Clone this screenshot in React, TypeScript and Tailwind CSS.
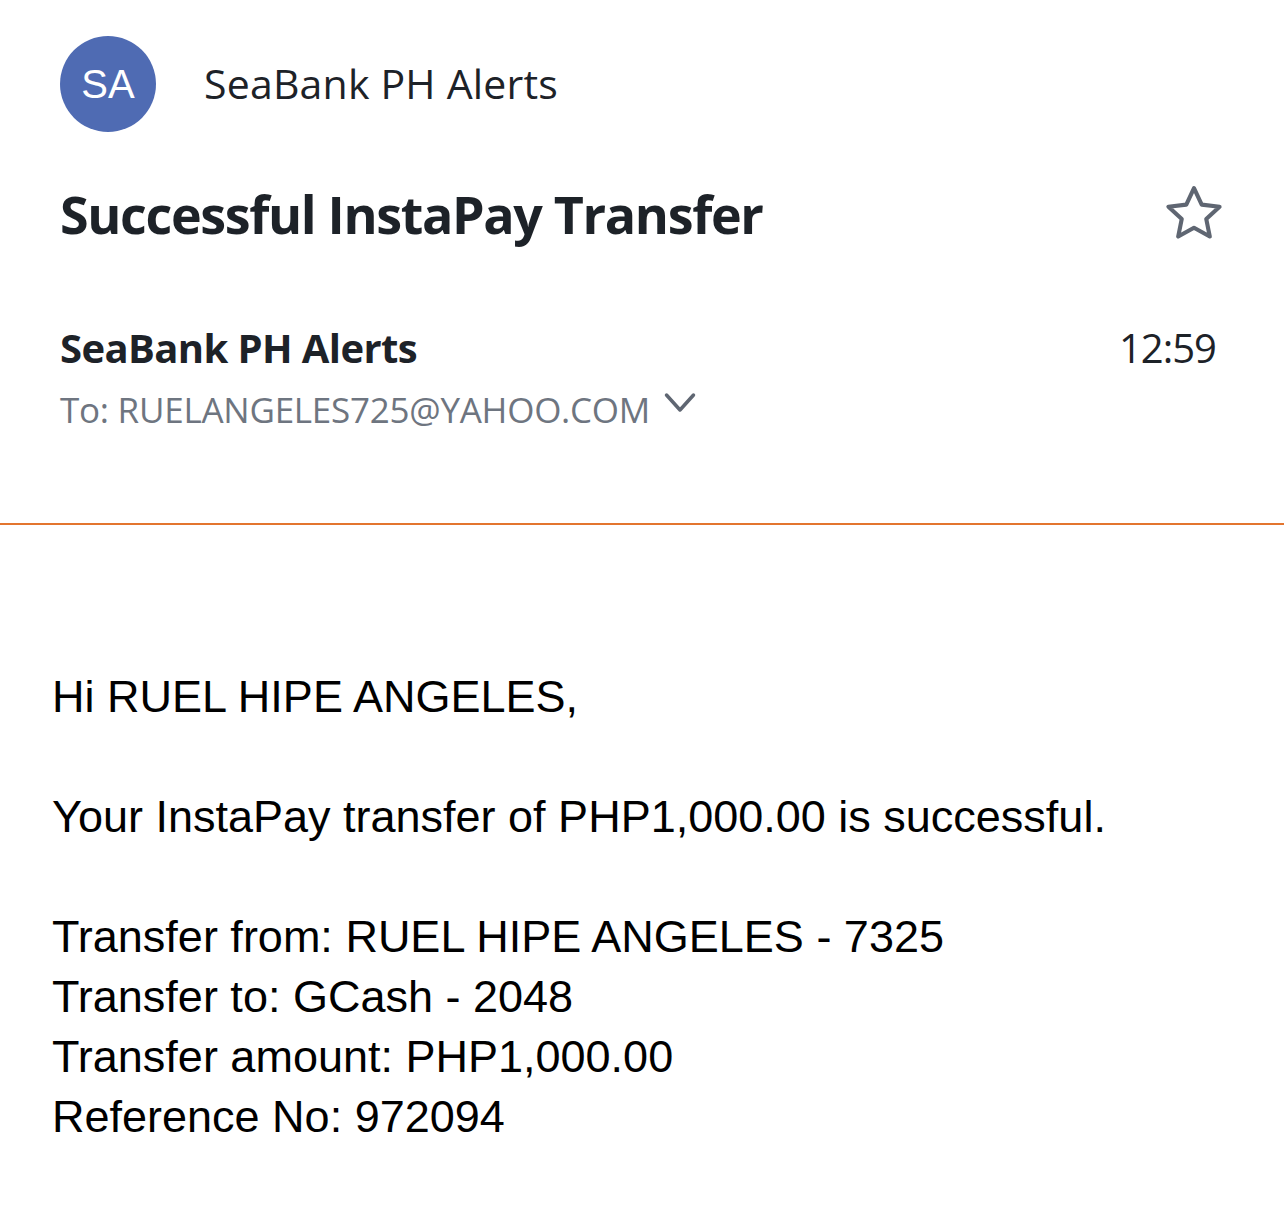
import React from 'react';

const bodyLines = [
  'Transfer from: RUEL HIPE ANGELES - 7325',
  'Transfer to: GCash - 2048',
  'Transfer amount: PHP1,000.00',
  'Reference No: 972094',
];

const StarIcon: React.FC = () => (
  <svg width="66" height="66" viewBox="0 0 24 24" fill="none" stroke="#5f6672" strokeWidth="1.5" strokeLinejoin="round">
    <path d="M12 2.6l2.8 6 6.5.75-4.85 4.45 1.3 6.4L12 17l-5.75 3.2 1.3-6.4L2.7 9.35l6.5-.75z" />
  </svg>
);

const App: React.FC = () => {
  return (
    <div className="w-[1284px] h-[1207px] bg-white overflow-hidden">
      {/* Header */}
      <div className="px-[60px] pt-[36px] font-['Open_Sans',sans-serif]">
        <div className="flex items-center">
          <div className="w-[96px] h-[96px] rounded-full bg-[#4f6bb3] flex items-center justify-center text-white text-[40px] font-['Liberation_Sans',sans-serif]">
            SA
          </div>
          <span className="ml-[48px] text-[41px] text-[#1d2228] tracking-[0.2px]">SeaBank PH Alerts</span>
        </div>

        <div className="mt-[43px] flex items-center justify-between">
          <h1 className="text-[52px] font-bold text-[#1d2228] tracking-[-1.35px]">Successful InstaPay Transfer</h1>
          <div className="-mr-[3px] -my-[4px]">
            <StarIcon />
          </div>
        </div>

        <div className="mt-[65px] flex items-center justify-between">
          <span className="text-[40px] font-bold text-[#1d2228] tracking-[-0.6px]">SeaBank PH Alerts</span>
          <span className="mr-[8px] text-[40px] text-[#1d2228] tracking-[-1px]">12:59</span>
        </div>
        <div className="mt-[6px] flex items-center text-[35px] text-[#6e7580] tracking-[-0.25px]">
          <span>To: RUELANGELES725@YAHOO.COM</span>
          <svg className="ml-[14px] -mt-[14px]" width="32" height="22" viewBox="0 0 32 22" fill="none" stroke="#5f6672" strokeWidth="3.5" strokeLinecap="round" strokeLinejoin="round">
            <path d="M2.5 3l13.5 15 13.5-15" />
          </svg>
        </div>
      </div>

      <div className="mt-[86px] h-[2px] bg-[#e3752f]" />

      {/* Body */}
      <div className="pl-[52px] pt-[142px] font-['Liberation_Sans',sans-serif] text-[45px] leading-[60px] text-black">
        <p>Hi RUEL HIPE ANGELES,</p>
        <p className="mt-[60px]">Your InstaPay transfer of PHP1,000.00 is successful.</p>
        <div className="mt-[60px]">
          {bodyLines.map((line) => (
            <p key={line}>{line}</p>
          ))}
        </div>
      </div>
    </div>
  );
};

export default App;
